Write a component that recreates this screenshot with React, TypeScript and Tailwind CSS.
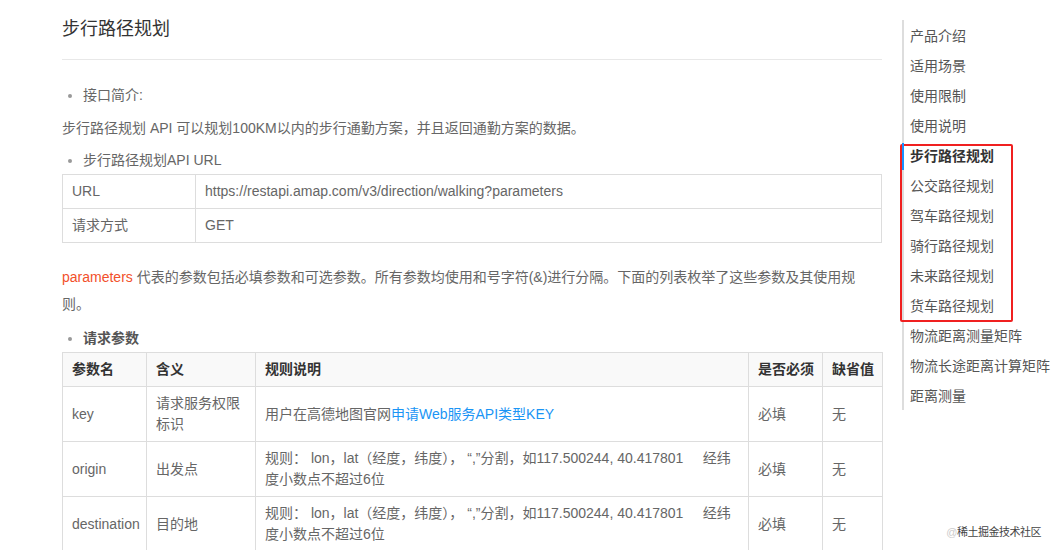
import React from 'react';

const NAV = [
  '产品介绍',
  '适用场景',
  '使用限制',
  '使用说明',
  '步行路径规划',
  '公交路径规划',
  '驾车路径规划',
  '骑行路径规划',
  '未来路径规划',
  '货车路径规划',
  '物流距离测量矩阵',
  '物流长途距离计算矩阵',
  '距离测量',
];

const RULE = '规则： lon，lat（经度，纬度）， “,”分割，如117.500244, 40.417801\u00a0\u00a0\u00a0\u00a0\u00a0经纬度小数点不超过6位';

const PARAMS = [
  { name: 'key', meaning: '请求服务权限标识', rule: null, required: '必填', def: '无' },
  { name: 'origin', meaning: '出发点', rule: RULE, required: '必填', def: '无' },
  { name: 'destination', meaning: '目的地', rule: RULE, required: '必填', def: '无' },
];

const td = 'border border-[#ddd] px-[9px] align-middle';
const th = 'border border-[#ddd] pl-[9px] pr-0 align-middle whitespace-nowrap';

export default function App() {
  return (
    <div
      className="relative w-[1055px] h-[550px] overflow-hidden bg-white flex text-[14px] text-[#666]"
      style={{ fontFamily: '"Liberation Sans", "Noto Sans CJK SC", sans-serif' }}
    >
      {/* Main column */}
      <div className="ml-[62px] w-[820px] shrink-0">
        <h1 className="pt-[17px] pb-[18px] text-[18px] leading-[24px] text-[#333] border-b border-[#e8e8e8]">步行路径规划</h1>

        <ul className="list-disc pl-[21px] mt-[23px] marker:text-[#999]">
          <li className="leading-[24px]">接口简介:</li>
        </ul>
        <p className="mt-[9px] leading-[24px]">步行路径规划 API 可以规划100KM以内的步行通勤方案，并且返回通勤方案的数据。</p>
        <ul className="list-disc pl-[21px] mt-[8px] marker:text-[#999]">
          <li className="leading-[24px]">步行路径规划API URL</li>
        </ul>

        <table className="mt-[2px] w-full border-collapse table-fixed">
          <colgroup>
            <col className="w-[133px]" />
            <col />
          </colgroup>
          <tbody>
            <tr className="h-[34px]">
              <td className={td}>URL</td>
              <td className={td}>https://restapi.amap.com/v3/direction/walking?parameters</td>
            </tr>
            <tr className="h-[34px]">
              <td className={td}>请求方式</td>
              <td className={td}>GET</td>
            </tr>
          </tbody>
        </table>

        <p className="mt-[21px] leading-[27px]">
          <span className="text-[#f2502a]">parameters</span> 代表的参数包括必填参数和可选参数。所有参数均使用和号字符(&amp;)进行分隔。下面的列表枚举了这些参数及其使用规则。
        </p>

        <ul className="list-disc pl-[21px] mt-[8px] marker:text-[#999]">
          <li className="leading-[24px] font-bold text-[#555]">请求参数</li>
        </ul>

        <table className="mt-[2px] w-full border-collapse table-fixed">
          <colgroup>
            <col className="w-[84px]" />
            <col className="w-[109px]" />
            <col className="w-[493px]" />
            <col className="w-[74px]" />
            <col className="w-[60px]" />
          </colgroup>
          <thead>
            <tr className="h-[34px] bg-[#f9f9f9] text-[#333] font-bold text-left">
              <th className={th}>参数名</th>
              <th className={th}>含义</th>
              <th className={th}>规则说明</th>
              <th className={th}>是否必须</th>
              <th className={th}>缺省值</th>
            </tr>
          </thead>
          <tbody>
            {PARAMS.map(p => (
              <tr key={p.name} className="h-[55px] leading-[21px]">
                <td className={td}>{p.name}</td>
                <td className={td}>{p.meaning}</td>
                <td className={td}>
                  {p.rule ?? (
                    <>
                      用户在高德地图官网<span className="text-[#1a95f5]">申请Web服务API类型KEY</span>
                    </>
                  )}
                </td>
                <td className={td}>{p.required}</td>
                <td className={td}>{p.def}</td>
              </tr>
            ))}
          </tbody>
        </table>
      </div>

      {/* Right nav */}
      <div
        className="ml-[20px] mt-[20px] self-start border-l-2 border-[#ddd] text-[#555]"
        style={{ fontFamily: '"Noto Sans CJK SC", sans-serif' }}
      >
        {NAV.slice(0, 4).map(item => (
          <div key={item} className="h-[30px] leading-[30px] pl-[6px] whitespace-nowrap">{item}</div>
        ))}
        <div className="relative">
          <div className="absolute -left-[4px] top-[4px] -bottom-[2px] w-[113px] border-2 border-[#f02020] rounded-[2px]" />
          <div className="h-[30px] leading-[30px] pl-[6px] whitespace-nowrap font-bold text-[#333] relative">
            <span className="absolute -left-[2px] top-[3px] bottom-0 w-[2px] bg-[#1890ff]" />
            {NAV[4]}
          </div>
          {NAV.slice(5, 10).map(item => (
            <div key={item} className="h-[30px] leading-[30px] pl-[6px] whitespace-nowrap">{item}</div>
          ))}
        </div>
        {NAV.slice(10).map(item => (
          <div key={item} className="h-[30px] leading-[30px] pl-[6px] whitespace-nowrap">{item}</div>
        ))}
      </div>

      {/* Watermark */}
      <div className="absolute right-[14px] bottom-[10px] text-[11px] text-[#444] tracking-[-0.5px]" style={{ textShadow: '0 0 2px #fff, 0 0 2px #fff' }}>
        <span className="text-[#ccc]">@</span>稀土掘金技术社区
      </div>
    </div>
  );
}
